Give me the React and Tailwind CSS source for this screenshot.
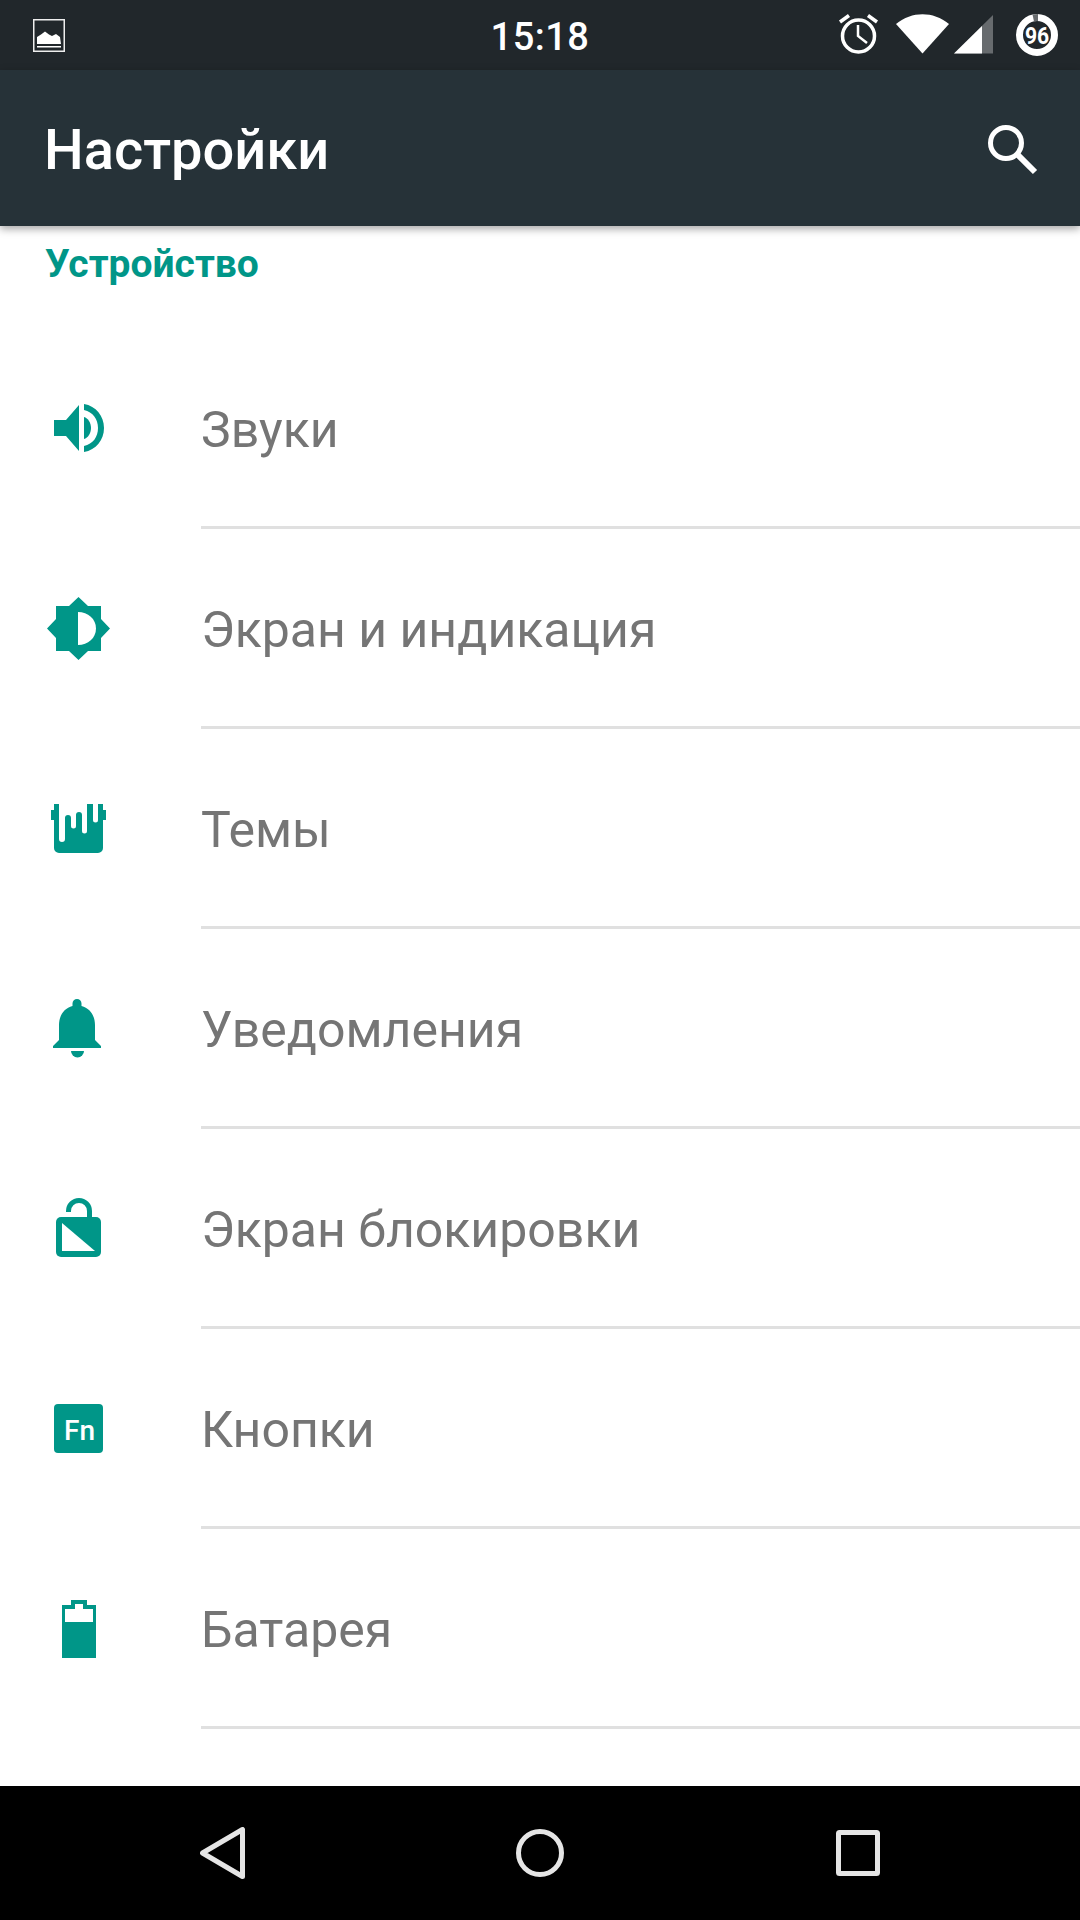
import React from 'react';

const teal = '#009688';

const Icon = ({ children, viewBox = '0 0 100 100' }) => (
  <svg width="100" height="100" viewBox={viewBox} className="shrink-0 ml-[30px]">
    {children}
  </svg>
);

const SoundIcon = () => (
  <Icon viewBox="0 -9 100 100">
    <path d="M24 31H36L49 16V62L36 47H24Z" fill={teal} />
    <path d="M54 15C66 17 74 27 74 39C74 51 66 61 54 63V57C63 55 68 48 68 39C68 30 63 23 54 21Z" fill={teal} />
    <path d="M54 28C58 29 61 34 61 39C61 44 58 49 54 50Z" fill={teal} />
  </Icon>
);

const BrightnessIcon = () => (
  <Icon>
    <path d="M48.5 17L58 26H71V39L80 48.5L71 58V71H58L48.5 80L39 71H26V58L17 48.5L26 39V26H39Z" fill={teal} />
    <path d="M48 32C58 32 66 39 66 48.5C66 58 58 65 48 65Z" fill="#fff" />
  </Icon>
);

const ThemesIcon = () => (
  <Icon>
    <path
      d="M24 24H29V59a3 3 0 0 0 6 0V38a3 3 0 0 1 6 0V46a2.5 2.5 0 0 0 5 0V35a3 3 0 0 1 6 0V51a2.5 2.5 0 0 0 5 0V24H63V40a2.5 2.5 0 0 0 5 0V24H73V68a5 5 0 0 1-5 5H29a5 5 0 0 1-5-5Z"
      fill={teal}
    />
    <rect x="21" y="30" width="3" height="10" fill={teal} />
    <rect x="73" y="30" width="3" height="10" fill={teal} />
  </Icon>
);

const BellIcon = () => (
  <Icon>
    <path
      d="M47 19a4.5 4.5 0 0 1 4.500 4.500V26C60 28 65 36 65 45V60L71 66V68H23V66L29 60V45C29 36 34 28 42.500 26V23.500A4.500 4.500 0 0 1 47 19Z"
      fill={teal}
    />
    <path d="M41 71H54a6.500 6.500 0 0 1-13 0Z" fill={teal} />
  </Icon>
);

const LockIcon = () => (
  <Icon>
    <path d="M38.500 32V31a10.500 10.500 0 0 1 21 0V37" fill="none" stroke={teal} strokeWidth="5" />
    <rect x="26" y="37" width="45" height="40" rx="5" fill={teal} />
    <path d="M32 43L65 71H32Z" fill="#fff" />
  </Icon>
);

const FnIcon = () => (
  <Icon>
    <rect x="24" y="24" width="49" height="49" rx="4" fill={teal} />
    <text x="34" y="60" fill="#fff" fontFamily="Roboto, sans-serif" fontWeight="500" fontSize="28">
      Fn
    </text>
  </Icon>
);

const BatteryIcon = () => (
  <Icon>
    <path d="M41 20H57V25H66V78H32V25H41Z" fill={teal} />
    <path d="M45 24H53V29H63V42H35V29H45Z" fill="#fff" />
  </Icon>
);

const rows = [
  { label: 'Звуки', icon: <SoundIcon /> },
  { label: 'Экран и индикация', icon: <BrightnessIcon /> },
  { label: 'Темы', icon: <ThemesIcon /> },
  { label: 'Уведомления', icon: <BellIcon /> },
  { label: 'Экран блокировки', icon: <LockIcon /> },
  { label: 'Кнопки', icon: <FnIcon /> },
  { label: 'Батарея', icon: <BatteryIcon /> },
];

const StatusIcons = () => (
  <svg width="300" height="70" viewBox="0 0 300 70" className="shrink-0">
    {/* alarm */}
    <circle cx="78.500" cy="36" r="16" fill="none" stroke="#fff" strokeWidth="3.500" />
    <path d="M78 25V36L87 43" fill="none" stroke="#fff" strokeWidth="2.500" />
    <path d="M60 22L69 15.500M97 22L88 15.500" fill="none" stroke="#fff" strokeWidth="3.500" />
    {/* wifi */}
    <path d="M116 24C132 11 153 11 169 24L142.500 53.500Z" fill="#fff" />
    {/* signal */}
    <path d="M174 53.500L213 15V53.500Z" fill="#676b6e" />
    <path d="M174 53.500L202 26V53.500Z" fill="#fff" />
    {/* battery */}
    <circle cx="257" cy="35" r="17.500" fill="none" stroke="#fff" strokeWidth="7" />
    <path d="M252.500 14.500L258 14V21L254 21.500Z" fill="#676b6e" />
    <text
      transform="translate(257 43.500) scale(0.88 1)"
      textAnchor="middle"
      fill="#fff"
      fontFamily="Roboto, sans-serif"
      fontWeight="700"
      fontSize="24"
    >
      96
    </text>
  </svg>
);

export default function App() {
  return (
    <div className="flex flex-col h-[1920px] w-[1080px] overflow-hidden bg-white font-['Roboto',sans-serif]">
      <div className="flex items-center h-[70px] bg-[#21272b]">
        <div className="flex-1">
          <svg width="32" height="33" viewBox="0 0 32 33" className="ml-[33px]">
            <rect x="0.750" y="0.750" width="30.500" height="31.500" fill="none" stroke="#eee" strokeWidth="1.500" />
            <rect x="4" y="27" width="24" height="1.500" fill="#fff" />
            <path d="M4 25V18L8 15.500L12 12.500L16 15.500L19 17L23 15L27 18L28 25Z" fill="#fff" />
          </svg>
        </div>
        <span className="text-white text-[38px] font-medium tracking-[0.5px] leading-none pt-[3px]">15:18</span>
        <div className="flex-1 flex justify-end">
          <StatusIcons />
        </div>
      </div>

      <div className="relative z-10 flex items-center justify-between h-[156px] pl-[44px] pr-[40px] bg-[#263238] shadow-[0_3px_8px_rgba(0,0,0,0.35)]">
        <h1 className="text-white text-[56px] font-medium leading-none pt-[4px]">Настройки</h1>
        <svg width="54" height="54" viewBox="0 0 54 54" className="shrink-0 mt-[4px]">
          <circle cx="20" cy="20" r="15.500" fill="none" stroke="#fff" strokeWidth="5" />
          <path d="M31 31L49 49" fill="none" stroke="#fff" strokeWidth="6" />
        </svg>
      </div>

      <div className="flex-1 overflow-hidden">
        <div className="h-[103px] pl-[45px] pt-[15px] text-[39px] font-bold leading-[46px] text-[#009688]">
          Устройство
        </div>
        {rows.map((row) => (
          <div key={row.label}>
            <div className="flex items-center h-[197px] pt-[5px]">
              {row.icon}
              <span className="ml-[71px] text-[50px] leading-none text-[#757575]">{row.label}</span>
            </div>
            <div className="ml-[201px] h-[3px] bg-[#e0e0e0]" />
          </div>
        ))}
      </div>

      <div className="flex items-center justify-between h-[134px] pl-[200px] pr-[200px] bg-black">
        <svg width="45" height="52" viewBox="0 0 45 52">
          <path d="M42.500 2.500V49.500L2.500 26Z" fill="none" stroke="#e5e5e5" strokeWidth="5" strokeLinejoin="round" />
        </svg>
        <svg width="48" height="48" viewBox="0 0 48 48" className="mr-[2px]">
          <circle cx="24" cy="24" r="21.500" fill="none" stroke="#e5e5e5" strokeWidth="5" />
        </svg>
        <svg width="44" height="46" viewBox="0 0 44 46">
          <rect x="2.500" y="2.500" width="39" height="41" rx="1" fill="none" stroke="#e5e5e5" strokeWidth="5" />
        </svg>
      </div>
    </div>
  );
}
